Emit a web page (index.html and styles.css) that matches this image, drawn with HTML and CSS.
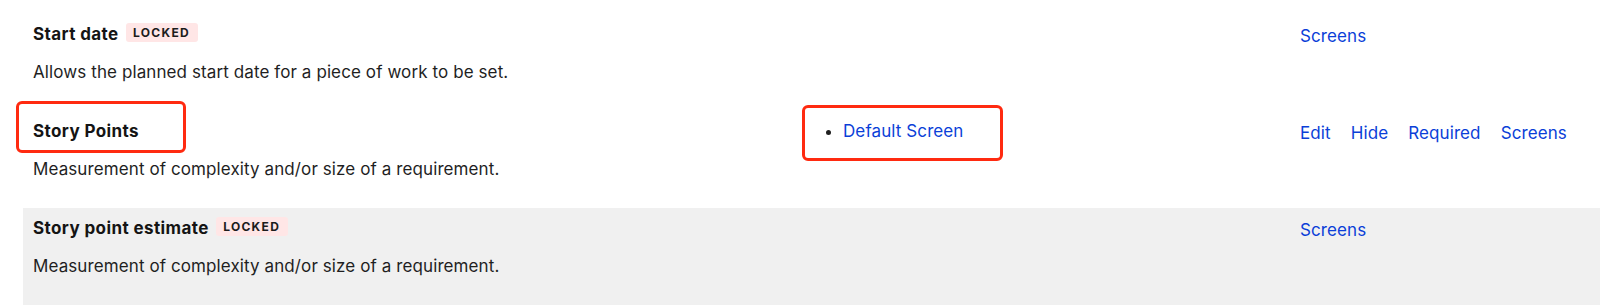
FILE: index.html
```html
<!DOCTYPE html>
<html lang="en">
<head>
  <meta charset="UTF-8" />
  <title>Custom fields</title>
  <link rel="stylesheet" href="styles.css">
</head>
<body>
  <main class="fields">
    <table class="field-table">
      <colgroup>
        <col class="col-name" />
        <col class="col-screens" />
        <col class="col-actions" />
      </colgroup>
      <tbody>
        <tr>
          <td>
            <div class="field-title">Start date <span class="lozenge">Locked</span></div>
            <p class="field-desc">Allows the planned start date for a piece of work to be set.</p>
          </td>
          <td></td>
          <td>
            <ul class="actions">
              <li><a href="#">Screens</a></li>
            </ul>
          </td>
        </tr>
        <tr>
          <td>
            <div class="field-title"><span class="marked marked-title">Story Points</span></div>
            <p class="field-desc">Measurement of complexity and/or size of a requirement.</p>
          </td>
          <td>
            <ul class="screen-list">
              <li><span class="marked marked-screen"><a href="#">Default Screen</a></span></li>
            </ul>
          </td>
          <td>
            <ul class="actions">
              <li><a href="#">Edit</a></li>
              <li><a href="#">Hide</a></li>
              <li><a href="#">Required</a></li>
              <li><a href="#">Screens</a></li>
            </ul>
          </td>
        </tr>
        <tr class="hover">
          <td>
            <div class="field-title">Story point estimate <span class="lozenge">Locked</span></div>
            <p class="field-desc">Measurement of complexity and/or size of a requirement.</p>
          </td>
          <td></td>
          <td>
            <ul class="actions">
              <li><a href="#">Screens</a></li>
            </ul>
          </td>
        </tr>
      </tbody>
    </table>
  </main>
</body>
</html>
```

FILE: styles.css
```css
body {
  margin: 0;
  background: #fff;
  color: #1f1f1f;
  font-family: "Inter", "Noto Sans", sans-serif;
  font-size: 17px;
  line-height: 24px;
  letter-spacing: 0.1px;
  overflow: hidden;
}
.fields {
  padding: 14px 0 0 23px;
}
.field-table {
  border-collapse: collapse;
  width: 1600px;
  table-layout: fixed;
}
.col-name {
  width: 770px;
}
.col-screens {
  width: 497px;
}
.field-table td {
  vertical-align: top;
  padding: 8px 10px 27px;
}
.field-table tr.hover td {
  background-color: #f0f0f0;
}
.field-title {
  font-weight: 700;
  color: #141414;
  letter-spacing: 0.4px;
}
.field-desc {
  margin: 14px 0 0;
}
.lozenge {
  display: inline-block;
  margin-left: 3px;
  padding: 0 8px 0 7px;
  background-color: #ffe6e6;
  color: #1c1c1c;
  border-radius: 3px;
  font-size: 12px;
  font-weight: 700;
  line-height: 19px;
  letter-spacing: 1.3px;
  text-transform: uppercase;
  vertical-align: 3px;
}
a {
  color: #0b3fd8;
  text-decoration: none;
}
.actions {
  display: flex;
  gap: 20px;
  list-style: none;
  margin: 0;
  padding: 2px 0 0;
}
.screen-list {
  margin: 0;
  padding-left: 40px;
}
/* red annotation boxes */
.marked {
  display: inline-block;
  position: relative;
}
.marked::after {
  content: "";
  position: absolute;
  border: 3px solid #ff2a10;
  border-radius: 6px;
}
.marked-title::after {
  left: -17px;
  top: -18px;
  right: -47px;
  bottom: -10px;
}
.marked-screen::after {
  left: -41px;
  top: -14px;
  right: -39px;
  bottom: -18px;
}
```
